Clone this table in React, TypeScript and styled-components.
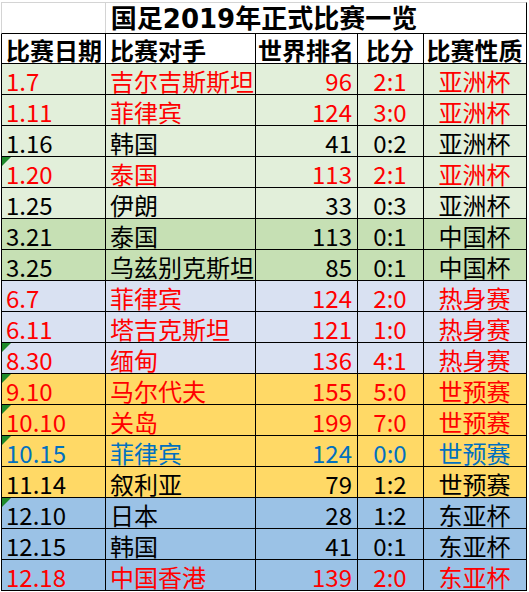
import React from "react";
import styled, { createGlobalStyle } from "styled-components";

const GlobalStyle = createGlobalStyle`
  html, body {
    margin: 0;
    padding: 0;
    background: #ffffff;
  }
  body {
    font-family: "Noto Sans CJK SC", "Liberation Sans", sans-serif;
  }
`;

type Tone = "black" | "red" | "blue";
type Band = "green" | "deepGreen" | "lavender" | "gold" | "sky";
type Align = "left" | "center" | "right";

interface IMatch {
  date: string;
  rival: string;
  rank: number;
  score: string;
  kind: string;
  tone: Tone;
  band: Band;
  flag?: boolean;
}

const palette = {
  black: "#000000",
  red: "#ff0000",
  blue: "#0070c0",
  green: "#e2efda",
  deepGreen: "#c6e0b4",
  lavender: "#d9e1f2",
  gold: "#ffd966",
  sky: "#9bc2e6",
  grid: "#d4d4d4",
  marker: "#1f8a2a",
};

const matches: IMatch[] = [
  { date: "1.7", rival: "吉尔吉斯斯坦", rank: 96, score: "2:1", kind: "亚洲杯", tone: "red", band: "green" },
  { date: "1.11", rival: "菲律宾", rank: 124, score: "3:0", kind: "亚洲杯", tone: "red", band: "green" },
  { date: "1.16", rival: "韩国", rank: 41, score: "0:2", kind: "亚洲杯", tone: "black", band: "green" },
  { date: "1.20", rival: "泰国", rank: 113, score: "2:1", kind: "亚洲杯", tone: "red", band: "green", flag: true },
  { date: "1.25", rival: "伊朗", rank: 33, score: "0:3", kind: "亚洲杯", tone: "black", band: "green" },
  { date: "3.21", rival: "泰国", rank: 113, score: "0:1", kind: "中国杯", tone: "black", band: "deepGreen" },
  { date: "3.25", rival: "乌兹别克斯坦", rank: 85, score: "0:1", kind: "中国杯", tone: "black", band: "deepGreen" },
  { date: "6.7", rival: "菲律宾", rank: 124, score: "2:0", kind: "热身赛", tone: "red", band: "lavender" },
  { date: "6.11", rival: "塔吉克斯坦", rank: 121, score: "1:0", kind: "热身赛", tone: "red", band: "lavender" },
  { date: "8.30", rival: "缅甸", rank: 136, score: "4:1", kind: "热身赛", tone: "red", band: "lavender", flag: true },
  { date: "9.10", rival: "马尔代夫", rank: 155, score: "5:0", kind: "世预赛", tone: "red", band: "gold", flag: true },
  { date: "10.10", rival: "关岛", rank: 199, score: "7:0", kind: "世预赛", tone: "red", band: "gold", flag: true },
  { date: "10.15", rival: "菲律宾", rank: 124, score: "0:0", kind: "世预赛", tone: "blue", band: "gold", flag: true },
  { date: "11.14", rival: "叙利亚", rank: 79, score: "1:2", kind: "世预赛", tone: "black", band: "gold" },
  { date: "12.10", rival: "日本", rank: 28, score: "1:2", kind: "东亚杯", tone: "black", band: "sky", flag: true },
  { date: "12.15", rival: "韩国", rank: 41, score: "0:1", kind: "东亚杯", tone: "black", band: "sky" },
  { date: "12.18", rival: "中国香港", rank: 139, score: "2:0", kind: "东亚杯", tone: "red", band: "sky" },
];

const headers: { label: string; align: Align }[] = [
  { label: "比赛日期", align: "left" },
  { label: "比赛对手", align: "left" },
  { label: "世界排名", align: "center" },
  { label: "比分", align: "center" },
  { label: "比赛性质", align: "center" },
];

const justify = { left: "flex-start", center: "center", right: "flex-end" };

export default function App() {
  return (
    <>
      <GlobalStyle />
      <Sheet>
        <TitleRow>国足2019年正式比赛一览</TitleRow>
        <Row $bg="#ffffff" $height={30}>
          {headers.map((h) => (
            <HeadCell key={h.label} $align={h.align}>
              {h.label}
            </HeadCell>
          ))}
        </Row>
        {matches.map((m) => (
          <Row key={m.date} $bg={palette[m.band]} $height={31}>
            <Cell $align="left" $tone={m.tone}>
              {m.flag && <Marker />}
              {m.date}
            </Cell>
            <Cell $align="left" $tone={m.tone}>
              {m.rival}
            </Cell>
            <Cell $align="right" $tone={m.tone}>
              {m.rank}
            </Cell>
            <Cell $align="center" $tone={m.tone}>
              {m.score}
            </Cell>
            <Cell $align="center" $tone={m.tone}>
              {m.kind}
            </Cell>
          </Row>
        ))}
      </Sheet>
    </>
  );
}

const Sheet = styled.div`
  width: 526px;
  margin: 2px 0 0 1px;
  display: flex;
  flex-direction: column;
`;

const TitleRow = styled.div`
  box-sizing: border-box;
  height: 32px;
  border-top: 1px solid ${palette.grid};
  border-left: 1px solid ${palette.grid};
  border-right: 1px solid ${palette.black};
  border-bottom: 1px solid ${palette.black};
  background: linear-gradient(
    to right,
    transparent 103px,
    ${palette.grid} 103px,
    ${palette.grid} 104px,
    transparent 104px
  );
  display: flex;
  align-items: center;
  justify-content: center;
  padding-top: 1px;
  font-family: "DejaVu Sans", "Noto Sans CJK SC", sans-serif;
  font-weight: 700;
  font-size: 26px;
  line-height: 30px;
  color: ${palette.black};
`;

const Row = styled.div<{ $bg: string; $height: number }>`
  display: grid;
  grid-template-columns: 104px 150px 102px 66px 103px;
  height: ${(p) => p.$height}px;
  border-left: 1px solid ${palette.black};
  background: ${(p) => p.$bg};
`;

const Cell = styled.div<{ $align: Align; $tone?: Tone }>`
  position: relative;
  box-sizing: border-box;
  border-right: 1px solid ${palette.black};
  border-bottom: 1px solid ${palette.black};
  display: flex;
  align-items: center;
  justify-content: ${(p) => justify[p.$align]};
  padding: 3px 5px 0 4px;
  font-size: 24px;
  line-height: 27px;
  color: ${(p) => palette[p.$tone ?? "black"]};
  white-space: nowrap;
`;

const HeadCell = styled(Cell)`
  font-weight: 700;
  padding-top: 1px;
`;

const Marker = styled.span`
  position: absolute;
  top: 0;
  left: 0;
  width: 0;
  height: 0;
  border-top: 9px solid ${palette.marker};
  border-right: 9px solid transparent;
`;
